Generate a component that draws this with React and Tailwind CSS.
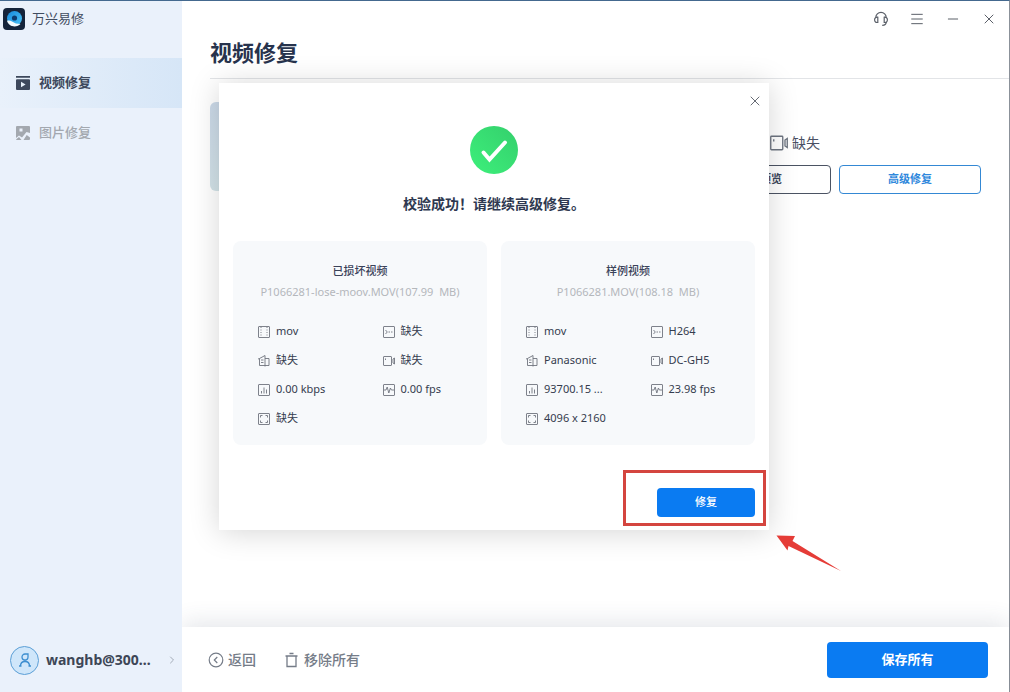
import { ChevronRight, Menu, Minus, X } from 'lucide-react'

const damagedVideo = {
  title: '已损坏视频',
  file: 'P1066281-lose-moov.MOV(107.99\u00a0 MB)',
  format: 'mov',
  codec: '缺失',
  maker: '缺失',
  model: '缺失',
  bitrate: '0.00 kbps',
  fps: '0.00 fps',
  size: '缺失',
}

const sampleVideo = {
  title: '样例视频',
  file: 'P1066281.MOV(108.18\u00a0 MB)',
  format: 'mov',
  codec: 'H264',
  maker: 'Panasonic',
  model: 'DC-GH5',
  bitrate: '93700.15 ...',
  fps: '23.98 fps',
  size: '4096 x 2160',
}

const specIcons = {
  format: (
    <>
      <rect x="0.5" y="0.5" width="11" height="11" rx="0.5" />
      <path d="M3 1v10M9 1v10" strokeDasharray="1 1.5" />
    </>
  ),
  codec: (
    <>
      <rect x="0.5" y="0.5" width="11" height="11" rx="0.5" />
      <path d="M2.500 4l1.800 2-1.800 2M5.500 6H7M8 6h1.500" />
    </>
  ),
  maker: (
    <>
      <path d="M1.500 10.500V3.500l5.500-3v11M1.500 10.500H7M7 3.500h4v7H7M0 4l1.500-.5" />
      <path d="M3 5h2.500M3 7.500h2.500" />
    </>
  ),
  model: (
    <>
      <rect x="0.5" y="1.500" width="8" height="9" rx="0.5" />
      <path d="M10 4l1.500-1v6L10 8zM2.500 3.500v1.500" />
    </>
  ),
  bitrate: (
    <>
      <rect x="0.5" y="0.5" width="11" height="11" rx="0.5" />
      <path d="M3.500 9.500V7M6 9.500V3.500M8.500 9.500V5.500" />
    </>
  ),
  fps: (
    <>
      <rect x="0.5" y="0.5" width="11" height="11" rx="0.5" />
      <path d="M1 6h2l1.200-3 1.600 6 1.600-5 1 2H11" />
    </>
  ),
  size: (
    <>
      <rect x="0.5" y="0.5" width="11" height="11" rx="0.5" />
      <path d="M2.500 4.500v-2h2M7.500 2.500h2v2M9.500 7.500v2h-2M4.500 9.500h-2v-2" />
    </>
  ),
}

function SpecIcon({ name, className = 'size-3' }) {
  return (
    <svg
      className={`shrink-0 ${className}`}
      viewBox="0 0 12 12"
      fill="none"
      stroke="currentColor"
      strokeWidth="0.9"
      aria-hidden="true"
    >
      {specIcons[name]}
    </svg>
  )
}

function Spec({ name, value }) {
  return (
    <li className="flex h-[29px] items-center gap-1.5 text-[#6f747e]">
      <SpecIcon name={name} />
      <span className="whitespace-nowrap text-[#353c4e]">{value}</span>
    </li>
  )
}

function VideoCard({ video }) {
  return (
    <section className="flex-1 rounded-lg bg-[#f7f9fb] pt-5 pb-3 text-[11px]">
      <h3 className="text-center leading-5 font-medium text-[#3a4259]">{video.title}</h3>
      <p className="mt-px text-center leading-5 whitespace-nowrap text-[#b4b7bb]">{video.file}</p>
      <ul className="mt-[15px] grid grid-cols-2 gap-x-5 pl-[25px]">
        <Spec name="format" value={video.format} />
        <Spec name="codec" value={video.codec} />
        <Spec name="maker" value={video.maker} />
        <Spec name="model" value={video.model} />
        <Spec name="bitrate" value={video.bitrate} />
        <Spec name="fps" value={video.fps} />
        <Spec name="size" value={video.size} />
      </ul>
    </section>
  )
}

function Logo() {
  return (
    <svg className="size-[22px]" viewBox="0 0 22 22" aria-hidden="true">
      <defs>
        <linearGradient id="ring" x1="0" y1="0" x2="1" y2="1">
          <stop offset="0" stopColor="#1789dc" />
          <stop offset="1" stopColor="#4cc4f7" />
        </linearGradient>
      </defs>
      <rect width="22" height="22" rx="4" fill="#14233a" />
      <circle cx="11.500" cy="10.500" r="7.500" fill="url(#ring)" />
      <circle cx="11.500" cy="10" r="2.600" fill="#0d3c70" />
      <path d="M4 12.800c2-.6 3.500-.3 5 .7 2.500 1.700 5 2.500 8.500 2.500-3 3.500-11.500 4-13.500-3.200z" fill="#f4fbff" />
    </svg>
  )
}

function Sidebar() {
  return (
    <aside className="relative z-20 flex w-[182px] shrink-0 flex-col bg-[#eaf1fb]">
      <div className="flex h-9 items-center gap-[7px] pl-[3px] text-[13px] text-[#3f4b5f]">
        <Logo />
        <span>万兴易修</span>
      </div>

      <nav className="mt-[21px] text-[13px]">
        <a
          href="#video"
          className="flex h-[50px] items-center gap-2 bg-linear-to-r from-[#e9f1fb] to-[#d6e6f7] pl-[15px] font-bold text-[#3d485c]"
        >
          <svg className="size-4" viewBox="0 0 16 16" aria-hidden="true">
            <path
              fill="currentColor"
              fillRule="evenodd"
              d="M1 1h14v1.800H1zM2 4.200h12a1 1 0 0 1 1 1V14a1 1 0 0 1-1 1H2a1 1 0 0 1-1-1V5.200a1 1 0 0 1 1-1zM6 6.800v5.400l4.600-2.700z"
            />
          </svg>
          视频修复
        </a>
        <a href="#image" className="flex h-[50px] items-center gap-2 pl-[15px] font-medium text-[#a3a8af]">
          <svg className="size-4" viewBox="0 0 16 16" aria-hidden="true">
            <path
              fill="currentColor"
              fillRule="evenodd"
              d="M2 1h12a1 1 0 0 1 1 1v6l-3.500-1L7 12.500 4 10.500 1 13V2a1 1 0 0 1 1-1zM4.500 3.500v3h3v-3zM1 14.500l3-2.500 2.500 3H1.500zM8.500 15l3.200-5L15 12.500V14a1 1 0 0 1-1 1z"
            />
          </svg>
          图片修复
        </a>
      </nav>

      <button type="button" className="mt-auto flex h-16 items-center pr-1 pl-[10px] text-left">
        <span className="grid size-[29px] place-items-center rounded-full border border-[#5b9fd6] bg-[#cfe6fa] text-[#3d8ed0]">
          <svg className="size-4" viewBox="0 0 16 16" fill="none" stroke="currentColor" strokeWidth="1.300" aria-hidden="true">
            <path d="M5 5a3 3 0 0 1 3-3h3v3a3 3 0 0 1-6 0zM3.500 14c0-6 9-6 9 0M2 14h2.500M11.500 14H14" />
          </svg>
        </span>
        <span className="ml-[7px] flex-1 text-sm font-bold text-[#3d4656]">wanghb@300...</span>
        <ChevronRight size={12} className="text-[#a3abb7]" aria-hidden="true" />
      </button>
    </aside>
  )
}

function WindowControls() {
  return (
    <div className="flex h-9 items-center justify-end gap-5 pr-3 text-[#5b6069]">
      <button type="button" aria-label="客服">
        <svg className="size-4" viewBox="0 0 16 16" fill="none" stroke="currentColor" strokeWidth="1.200" aria-hidden="true">
          <path d="M2.800 6.500a5.200 5.200 0 0 1 10.400 0M13.200 11c0 2-1.200 3.300-4 3.300" />
          <path d="M4.800 6.200v5.200c-2 .4-3.200-.8-3.200-2.600s1.200-3 3.200-2.600zM11.200 6.200v5.200c2 .4 3.200-.8 3.200-2.600s-1.200-3-3.200-2.600z" />
        </svg>
      </button>
      <button type="button" aria-label="菜单">
        <Menu size={16} strokeWidth={1.5} />
      </button>
      <button type="button" aria-label="最小化">
        <Minus size={16} strokeWidth={1.5} />
      </button>
      <button type="button" aria-label="关闭">
        <X size={16} strokeWidth={1.5} />
      </button>
    </div>
  )
}

function VideoRow() {
  return (
    <article className="flex justify-between pt-[23px] pr-7 pl-7">
      <div className="h-[89px] w-40 rounded-md bg-linear-to-b from-[#cbd9e8] to-[#d3e3e8]" />
      <div className="pt-[31px]">
        <div className="flex h-5 items-center gap-1 pl-[81px] text-sm text-[#4a5064]">
          <SpecIcon name="model" className="size-[18px] text-[#6d7480]" />
          缺失
        </div>
        <div className="mt-3 flex gap-2 text-[11px] font-bold">
          <button
            type="button"
            className="h-[29px] w-[142px] rounded-[4px] border border-[#4b5363] bg-white text-[#3d485c]"
          >
            视频预览
          </button>
          <button
            type="button"
            className="h-[29px] w-[142px] rounded-[4px] border border-[#3488d4] bg-white text-[#2f88dc]"
          >
            高级修复
          </button>
        </div>
      </div>
    </article>
  )
}

function RepairDialog() {
  return (
    <div
      role="dialog"
      aria-labelledby="dialog-title"
      className="absolute top-1 left-[37px] w-[550px] bg-white px-[14px] pb-[13px] shadow-[0_2px_28px_rgba(0,0,0,0.17)]"
    >
      <button type="button" aria-label="关闭对话框" className="absolute top-[10px] right-[6px] text-[#5b6069]">
        <X size={16} strokeWidth={1.4} />
      </button>

      <svg className="mx-auto mt-[43px] size-12" viewBox="0 0 48 48" aria-hidden="true">
        <defs>
          <linearGradient id="done" x1="1" y1="0" x2="0" y2="1">
            <stop offset="0" stopColor="#34cf6c" />
            <stop offset="1" stopColor="#3df07b" />
          </linearGradient>
        </defs>
        <circle cx="24" cy="24" r="24" fill="url(#done)" />
        <path
          d="M13.500 26.500L19.500 33.500l15.500-17"
          fill="none"
          stroke="#fff"
          strokeWidth="4"
          strokeLinecap="round"
        />
      </svg>

      <h2 id="dialog-title" className="mt-5 text-center text-sm leading-5 font-bold text-[#2e3850]">
        校验成功！请继续高级修复。
      </h2>

      <div className="mt-[27px] flex gap-[14px]">
        <VideoCard video={damagedVideo} />
        <VideoCard video={sampleVideo} />
      </div>

      <div className="mt-[43px] flex justify-end">
        <div className="relative">
          <button
            type="button"
            className="block h-[29px] w-[98px] rounded-[4px] bg-[#0a7bf2] text-[11px] font-medium text-white"
          >
            修复
          </button>
          <div className="pointer-events-none absolute -top-[18px] -right-[11px] -bottom-[9px] -left-[34px] border-3 border-[#d4453f]" />
          <svg className="absolute top-[47px] left-[119px] h-9 w-[66px]" viewBox="0 0 66 36" aria-hidden="true">
            <path d="M0.500 0.500L19 1l-2.500 5L65 36 12.500 11 11.500 15.500z" fill="#e53c37" />
          </svg>
        </div>
      </div>
    </div>
  )
}

function Footer() {
  return (
    <footer className="relative flex h-[65px] items-center gap-7 bg-white pr-[21px] pl-[26px] text-sm font-medium text-[#757c88] shadow-[0_-4px_24px_rgba(60,70,100,0.14)]">
      <button type="button" className="flex items-center gap-1">
        <svg className="size-4" viewBox="0 0 16 16" fill="none" stroke="currentColor" strokeWidth="1.200" aria-hidden="true">
          <circle cx="8" cy="8" r="6.800" />
          <path d="M9.300 5L6.300 8l3 3" />
        </svg>
        返回
      </button>
      <button type="button" className="flex items-center gap-1">
        <svg className="size-4" viewBox="0 0 16 16" fill="none" stroke="currentColor" strokeWidth="1.300" aria-hidden="true">
          <path d="M1.500 4h12M5.500 1.500h4M3 4v10.500h9V4" />
        </svg>
        移除所有
      </button>
      <button type="button" className="ml-auto h-9 w-[161px] rounded-[4px] bg-[#0a7bf2] text-[13px] font-bold text-white">
        保存所有
      </button>
    </footer>
  )
}

export default function App() {
  return (
    <div className="flex min-h-screen border-t border-r border-t-[#44698f] border-r-[#8b9199] bg-white font-['Noto_Sans','Noto_Sans_CJK_SC',sans-serif]">
      <Sidebar />
      <div className="flex min-w-0 flex-1 flex-col">
        <header>
          <WindowControls />
          <h1 className="ml-7 border-b border-[#e2e4e7] pb-[11px] text-[22px] leading-[30px] font-bold text-[#27334d]">
            视频修复
          </h1>
        </header>
        <main className="relative z-10 flex-1">
          <VideoRow />
          <RepairDialog />
        </main>
        <Footer />
      </div>
    </div>
  )
}
